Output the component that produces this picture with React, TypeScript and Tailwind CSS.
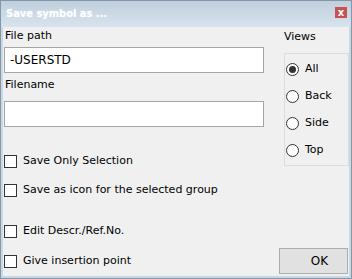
import React from "react";

function Checkbox({ label }: { label: string }) {
  return (
    <label className="flex h-[16px] items-center gap-[6px]">
      <span className="h-[13px] w-[13px] border border-[#333333] bg-white" />
      <span>{label}</span>
    </label>
  );
}

function Radio({ label, checked }: { label: string; checked?: boolean }) {
  return (
    <label className="flex h-[16px] items-center gap-[6px]">
      <span className="flex h-[13px] w-[13px] items-center justify-center rounded-full border border-[#333333] bg-white">
        {checked && <span className="h-[7px] w-[7px] rounded-full bg-[#333333]" />}
      </span>
      <span>{label}</span>
    </label>
  );
}

export default function App() {
  return (
    <div
      className="flex h-[279px] w-[352px] flex-col border border-[#8596a7] bg-[#c9d8e6] text-[11px] text-black"
      style={{ fontFamily: '"DejaVu Sans", Tahoma, sans-serif' }}
    >
      <div className="flex h-[26px] items-center justify-between bg-gradient-to-b from-[#c0cfdd] to-[#d8e3ee] pl-[5px] pr-[4px]">
        <span className="font-['DejaVu_Sans_Condensed',sans-serif] text-[11px] font-bold text-white [text-shadow:0_0_2px_#dfe9f3]">
          Save symbol as ...
        </span>
        <span className="mb-[3px] flex h-[11px] w-[12px] items-center justify-center bg-[#c75050] text-[10px] font-bold leading-none text-white">
          x
        </span>
      </div>

      <div className="mx-[2px] mb-[2px] flex flex-1 bg-[#f0f0f0] pl-[1px]">
        <div className="flex w-[260px] flex-col">
          <div className="mt-[1px] h-[16px] pl-[1px] leading-[16px]">File path</div>
          <div className="mt-[3px] flex h-[26px] items-center border border-[#a5a5a5] bg-white px-[5px] text-[12px]">
            -USERSTD
          </div>
          <div className="mt-[4px] h-[16px] pl-[1px] leading-[16px]">Filename</div>
          <div className="mt-[8px] h-[26px] border border-[#a5a5a5] bg-white" />
          <div className="mt-[26px]">
            <Checkbox label="Save Only Selection" />
          </div>
          <div className="mt-[13px]">
            <Checkbox label="Save as icon for the selected group" />
          </div>
          <div className="mt-[25px]">
            <Checkbox label="Edit Descr./Ref.No." />
          </div>
          <div className="mt-[14px]">
            <Checkbox label="Give insertion point" />
          </div>
        </div>

        <div className="ml-[15px] flex w-[70px] flex-col pb-[2px]">
          <div className="ml-[5px] mt-[2px] h-[16px] leading-[16px]">Views</div>
          <div className="ml-[5px] mt-[8px] flex h-[113px] flex-col gap-[11px] border border-[#dcdcdc] pl-[1px] pt-[7px]">
            <Radio label="All" checked />
            <Radio label="Back" />
            <Radio label="Side" />
            <Radio label="Top" />
          </div>
          <button className="mt-auto flex h-[26px] w-[69px] items-center justify-center border border-[#adadad] bg-[#e1e1e1] pl-[12px] text-[12px]">
            OK
          </button>
        </div>
      </div>
    </div>
  );
}
